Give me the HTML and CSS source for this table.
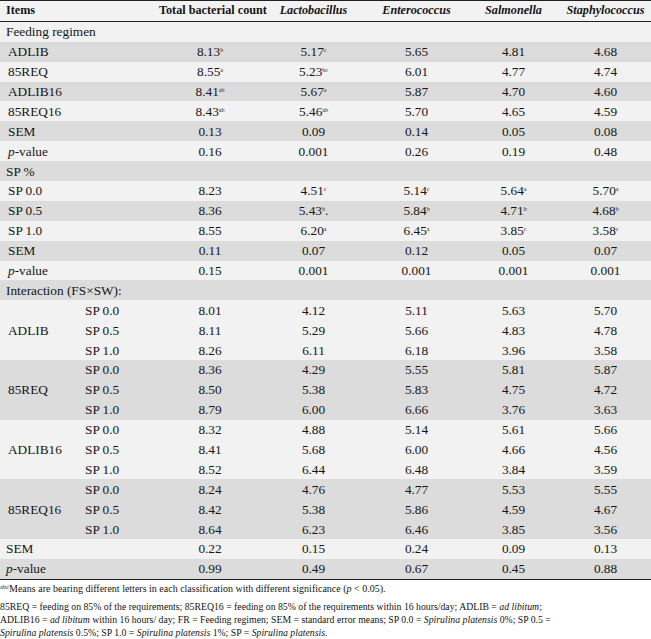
FILE: index.html
```html
<!DOCTYPE html>
<html>
<head>
<meta charset="utf-8">
<link rel="stylesheet" href="styles.css">
</head>
<body>
<table class="data">
  <colgroup>
    <col class="c-grp"><col class="c-sub"><col class="c-tbc"><col class="c-lac"><col class="c-ent"><col class="c-sal"><col class="c-sta">
  </colgroup>
  <thead>
    <tr class="head">
      <th colspan="2" class="lbl">Items</th>
      <th>Total bacterial count</th>
      <th><i>Lactobacillus</i></th>
      <th><i>Enterococcus</i></th>
      <th><i>Salmonella</i></th>
      <th><i>Staphylococcus</i></th>
    </tr>
  </thead>
  <tbody>
    <tr class="lt"><td colspan="7" class="lbl">Feeding regimen</td></tr>
    <tr class="dk"><td colspan="2" class="lbl ind">ADLIB</td><td>8.13<sup>b</sup></td><td>5.17<sup>c</sup></td><td>5.65</td><td>4.81</td><td>4.68</td></tr>
    <tr class="lt"><td colspan="2" class="lbl ind">85REQ</td><td>8.55<sup>a</sup></td><td>5.23<sup>bc</sup></td><td>6.01</td><td>4.77</td><td>4.74</td></tr>
    <tr class="dk"><td colspan="2" class="lbl ind">ADLIB16</td><td>8.41<sup>ab</sup></td><td>5.67<sup>a</sup></td><td>5.87</td><td>4.70</td><td>4.60</td></tr>
    <tr class="lt"><td colspan="2" class="lbl ind">85REQ16</td><td>8.43<sup>ab</sup></td><td>5.46<sup>ab</sup></td><td>5.70</td><td>4.65</td><td>4.59</td></tr>
    <tr class="dk"><td colspan="2" class="lbl ind">SEM</td><td>0.13</td><td>0.09</td><td>0.14</td><td>0.05</td><td>0.08</td></tr>
    <tr class="lt"><td colspan="2" class="lbl ind"><i>p</i>-value</td><td>0.16</td><td>0.001</td><td>0.26</td><td>0.19</td><td>0.48</td></tr>
    <tr class="dk"><td colspan="7" class="lbl">SP %</td></tr>
    <tr class="lt"><td colspan="2" class="lbl ind">SP 0.0</td><td>8.23</td><td>4.51<sup>c</sup></td><td>5.14<sup>c</sup></td><td>5.64<sup>a</sup></td><td>5.70<sup>a</sup></td></tr>
    <tr class="dk"><td colspan="2" class="lbl ind">SP 0.5</td><td>8.36</td><td>5.43<sup>b</sup>.</td><td>5.84<sup>b</sup></td><td>4.71<sup>b</sup></td><td>4.68<sup>b</sup></td></tr>
    <tr class="lt"><td colspan="2" class="lbl ind">SP 1.0</td><td>8.55</td><td>6.20<sup>a</sup></td><td>6.45<sup>a</sup></td><td>3.85<sup>c</sup></td><td>3.58<sup>c</sup></td></tr>
    <tr class="dk"><td colspan="2" class="lbl ind">SEM</td><td>0.11</td><td>0.07</td><td>0.12</td><td>0.05</td><td>0.07</td></tr>
    <tr class="lt"><td colspan="2" class="lbl ind"><i>p</i>-value</td><td>0.15</td><td>0.001</td><td>0.001</td><td>0.001</td><td>0.001</td></tr>
    <tr class="dk"><td colspan="7" class="lbl">Interaction (FS×SW):</td></tr>

    <tr class="lt"><td rowspan="3" class="lbl grp">ADLIB</td><td class="sub">SP 0.0</td><td>8.01</td><td>4.12</td><td>5.11</td><td>5.63</td><td>5.70</td></tr>
    <tr class="lt"><td class="sub">SP 0.5</td><td>8.11</td><td>5.29</td><td>5.66</td><td>4.83</td><td>4.78</td></tr>
    <tr class="lt"><td class="sub">SP 1.0</td><td>8.26</td><td>6.11</td><td>6.18</td><td>3.96</td><td>3.58</td></tr>

    <tr class="dk"><td rowspan="3" class="lbl grp">85REQ</td><td class="sub">SP 0.0</td><td>8.36</td><td>4.29</td><td>5.55</td><td>5.81</td><td>5.87</td></tr>
    <tr class="dk"><td class="sub">SP 0.5</td><td>8.50</td><td>5.38</td><td>5.83</td><td>4.75</td><td>4.72</td></tr>
    <tr class="dk"><td class="sub">SP 1.0</td><td>8.79</td><td>6.00</td><td>6.66</td><td>3.76</td><td>3.63</td></tr>

    <tr class="lt"><td rowspan="3" class="lbl grp">ADLIB16</td><td class="sub">SP 0.0</td><td>8.32</td><td>4.88</td><td>5.14</td><td>5.61</td><td>5.66</td></tr>
    <tr class="lt"><td class="sub">SP 0.5</td><td>8.41</td><td>5.68</td><td>6.00</td><td>4.66</td><td>4.56</td></tr>
    <tr class="lt"><td class="sub">SP 1.0</td><td>8.52</td><td>6.44</td><td>6.48</td><td>3.84</td><td>3.59</td></tr>

    <tr class="dk"><td rowspan="3" class="lbl grp">85REQ16</td><td class="sub">SP 0.0</td><td>8.24</td><td>4.76</td><td>4.77</td><td>5.53</td><td>5.55</td></tr>
    <tr class="dk"><td class="sub">SP 0.5</td><td>8.42</td><td>5.38</td><td>5.86</td><td>4.59</td><td>4.67</td></tr>
    <tr class="dk"><td class="sub">SP 1.0</td><td>8.64</td><td>6.23</td><td>6.46</td><td>3.85</td><td>3.56</td></tr>

    <tr class="lt"><td colspan="2" class="lbl">SEM</td><td>0.22</td><td>0.15</td><td>0.24</td><td>0.09</td><td>0.13</td></tr>
    <tr class="dk last"><td colspan="2" class="lbl"><i>p</i>-value</td><td>0.99</td><td>0.49</td><td>0.67</td><td>0.45</td><td>0.88</td></tr>
  </tbody>
</table>
<div class="notes">
  <p class="sig"><sup>abc</sup>Means are bearing different letters in each classification with different significance (<i>p</i> &lt; 0.05).</p>
  <p class="abbr">85REQ = feeding on 85% of the requirements; 85REQ16 = feeding on 85% of the requirements within 16 hours/day; ADLIB = <i>ad libitum</i>;<br>ADLIB16 = <i>ad libitum</i> within 16 hours/ day; FR = Feeding regimen; SEM = standard error means; SP 0.0 = <i>Spirulina platensis</i> 0%; SP 0.5 =<br><i>Spirulina platensis</i> 0.5%; SP 1.0 = <i>Spirulina platensis</i> 1%; SP = <i>Spirulina platensis</i>.</p>
</div>
</body>
</html>
```

FILE: styles.css
```css
html, body {
  margin: 0;
  padding: 0;
  background: #ffffff;
}
body {
  width: 651px;
  font-family: "Liberation Serif", "Times New Roman", serif;
  color: #151515;
}
.data {
  width: 651px;
  border-collapse: collapse;
  table-layout: fixed;
  font-size: 13.3px;
  border-top: 1.5px solid #222;
  border-bottom: 1px solid #222;
}
.c-grp { width: 80px; }
.c-sub { width: 79px; }
.c-tbc { width: 102px; }
.c-lac { width: 105px; }
.c-ent { width: 101px; }
.c-sal { width: 93px; }
.c-sta { width: 91px; }

.data th, .data td {
  height: 19.9px;
  padding: 0;
  text-align: center;
  vertical-align: middle;
  line-height: 15px;
  white-space: nowrap;
}
.data th {
  font-weight: bold;
  font-size: 12.2px;
  border-bottom: 1px solid #222;
}
.head { background: #f2f2f2; }
.lt { background: #f2f2f2; }
.dk { background: #dcdcdc; }
.data .lbl {
  text-align: left;
  padding-left: 6px;
}
.data .ind { padding-left: 8px; }
.data .grp { padding-left: 8px; }
.data .sub {
  text-align: left;
  padding-left: 5px;
}
sup {
  font-size: 6px;
  line-height: 0;
  vertical-align: 4px;
}
.notes {
  line-height: 13px;
  padding: 2px 0 0 0;
}
.notes p { margin: 0; }
.notes .sig {
  font-size: 10px;
  margin-bottom: 5px;
}
.notes .abbr { font-size: 9.75px; }
.notes sup { font-size: 6.5px; vertical-align: 3px; }
```
